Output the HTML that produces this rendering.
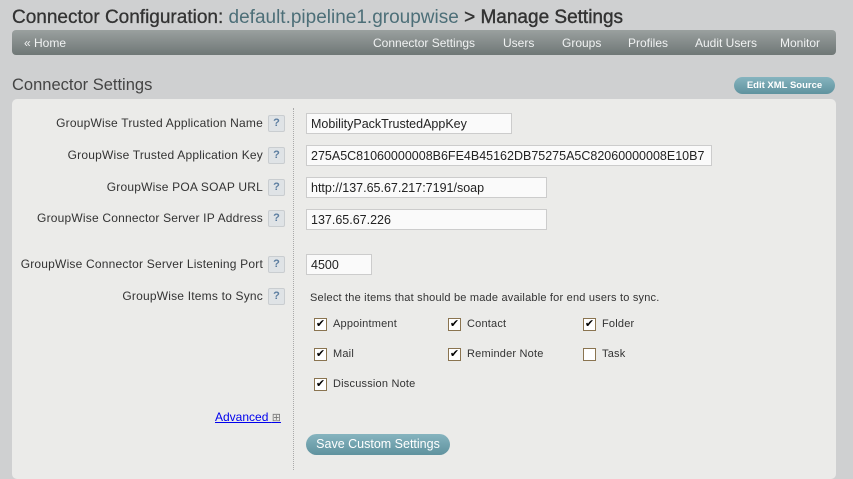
<!DOCTYPE html>
<html><head><style>
body{margin:0;width:853px;height:470px;background:#cfd0d1;font-family:"Liberation Sans",sans-serif;position:relative;overflow:hidden;color:#333}
.a{position:absolute;white-space:nowrap}
h1{position:absolute;left:12px;top:7px;margin:0;font-size:19px;font-weight:normal;color:#333}
.nav{position:absolute;left:12px;top:30px;width:824px;height:25px;border-radius:4px;background:linear-gradient(#9aa09f,#6f7776);font-size:12px}
.nav span{position:absolute;top:6px;color:#f0f2f2}
.panel{position:absolute;left:12px;top:99px;width:824px;height:380px;background:#ebebe9;border-radius:5px}
.lbl{position:absolute;right:590px;font-size:12px;letter-spacing:0.2px;color:#333;white-space:nowrap}
.q{position:absolute;left:268px;width:15px;height:15px;border:1px solid #c9cdd0;background:#dfe3e6;border-radius:2px;color:#5b7da0;font-size:11px;font-weight:bold;text-align:center;line-height:15px}
.in{position:absolute;left:306px;height:21px;border:1px solid #ccc;background:#fafafa;font-size:12.5px;line-height:20px;padding-left:4px;overflow:hidden;color:#222;box-sizing:border-box}
.cb{position:absolute;width:11px;height:11px;border:1px solid #8a7450;background:#fff;font-size:11px;line-height:10px;text-align:center;color:#000}
.ct{position:absolute;font-size:11px;letter-spacing:0.2px;color:#333}
</style></head><body>
<h1><span style="-webkit-text-stroke:0.3px #333">Connector Configuration:</span> <span style="color:#4d6f78">default.pipeline1.groupwise</span> <span style="-webkit-text-stroke:0.4px #333">&gt; Manage Settings</span></h1>
<div class="nav">
<span style="left:12px">« Home</span>
<span style="left:361px">Connector Settings</span>
<span style="left:491px">Users</span>
<span style="left:550px">Groups</span>
<span style="left:616px">Profiles</span>
<span style="left:683px">Audit Users</span>
<span style="left:768px">Monitor</span>
</div>
<div class="a" style="left:12px;top:76px;font-size:16.5px;color:#444">Connector Settings</div>
<div class="a" style="left:734px;top:77px;width:101px;height:17px;border-radius:9px;background:linear-gradient(#86b4bf,#5f929e);color:#fff;font-size:9.5px;font-weight:bold;text-align:center;line-height:17px">Edit XML Source</div>
<div class="panel"></div>
<div class="a" style="left:293px;top:108px;height:362px;border-left:1px dotted #aaa"></div>

<div class="lbl" style="top:116px">GroupWise Trusted Application Name</div><div class="q" style="top:115px">?</div>
<div class="in" style="top:113px;width:206px">MobilityPackTrustedAppKey</div>
<div class="lbl" style="top:148px">GroupWise Trusted Application Key</div><div class="q" style="top:147px">?</div>
<div class="in" style="top:145px;width:406px">275A5C81060000008B6FE4B45162DB75275A5C82060000008E10B7</div>
<div class="lbl" style="top:180px">GroupWise POA SOAP URL</div><div class="q" style="top:179px">?</div>
<div class="in" style="top:177px;width:241px">http://137.65.67.217:7191/soap</div>
<div class="lbl" style="top:211px">GroupWise Connector Server IP Address</div><div class="q" style="top:210px">?</div>
<div class="in" style="top:209px;width:241px">137.65.67.226</div>
<div class="lbl" style="top:257px">GroupWise Connector Server Listening Port</div><div class="q" style="top:256px">?</div>
<div class="in" style="top:254px;width:66px">4500</div>
<div class="lbl" style="top:289px">GroupWise Items to Sync</div><div class="q" style="top:288px">?</div>
<div class="ct" style="left:310px;top:292px">Select the items that should be made available for end users to sync.</div>

<div class="cb" style="left:314px;top:318px">✔</div><div class="ct" style="left:333px;top:318px">Appointment</div>
<div class="cb" style="left:448px;top:318px">✔</div><div class="ct" style="left:467px;top:318px">Contact</div>
<div class="cb" style="left:583px;top:318px">✔</div><div class="ct" style="left:602px;top:318px">Folder</div>
<div class="cb" style="left:314px;top:348px">✔</div><div class="ct" style="left:333px;top:348px">Mail</div>
<div class="cb" style="left:448px;top:348px">✔</div><div class="ct" style="left:467px;top:348px">Reminder Note</div>
<div class="cb" style="left:583px;top:348px"></div><div class="ct" style="left:602px;top:348px">Task</div>
<div class="cb" style="left:314px;top:378px">✔</div><div class="ct" style="left:333px;top:378px">Discussion Note</div>

<div class="a" style="left:215px;top:410px;font-size:12px;color:#00e;text-decoration:underline">Advanced <span style="color:#777;font-size:11px">⊞</span></div>
<div class="a" style="left:306px;top:434px;width:144px;height:21px;border-radius:11px;background:linear-gradient(#86b4bf,#5f929e);color:#fff;font-size:12.5px;text-align:center;line-height:21px">Save Custom Settings</div>
</body></html>
